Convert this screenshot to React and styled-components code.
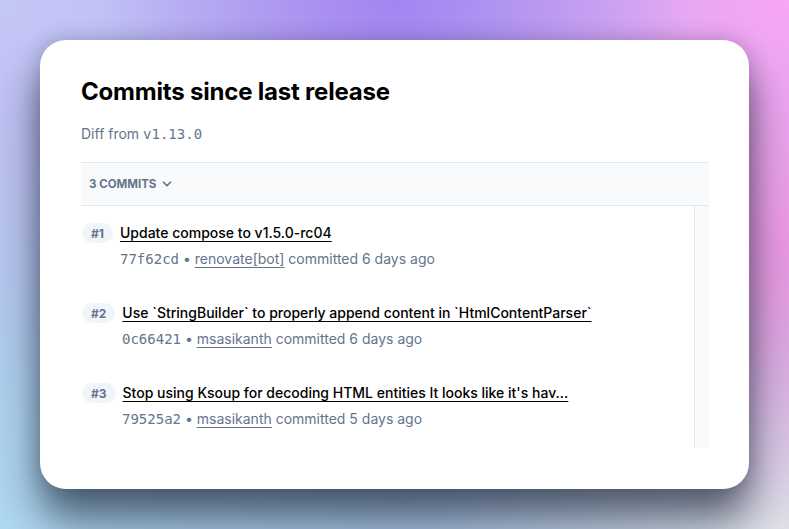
import styled, { createGlobalStyle } from "styled-components";
import { FiChevronDown } from "react-icons/fi";

const GlobalStyle = createGlobalStyle`
  html, body {
    margin: 0;
    padding: 0;
  }
  body {
    width: 789px;
    height: 529px;
    overflow: hidden;
    font-family: Inter, "Liberation Sans", sans-serif;
    background-color: #b7b4ee;
    background-image:
      radial-gradient(circle at 50% 0%, #a584f1 0%, rgba(165, 132, 241, 0) 45%),
      radial-gradient(circle at 100% 0%, #f7a6f4 0%, rgba(247, 166, 244, 0) 40%),
      radial-gradient(circle at 100% 45%, #e590da 0%, rgba(229, 144, 218, 0) 35%),
      radial-gradient(circle at 0% 0%, #c4c8f6 0%, rgba(196, 200, 246, 0) 40%),
      radial-gradient(circle at 0% 100%, #afd8f1 0%, rgba(175, 216, 241, 0) 45%),
      radial-gradient(circle at 100% 100%, #dfe2e8 0%, rgba(223, 226, 232, 0) 40%),
      linear-gradient(180deg, #b9b2f0 0%, #a9c4e4 100%);
  }
`;

const Page = styled.div`
  padding: 40px;
  box-sizing: border-box;
  height: 529px;
`;

const Card = styled.section`
  box-sizing: border-box;
  width: 709px;
  height: 449px;
  background: #ffffff;
  border-radius: 26px;
  padding: 36px 40px 0 41px;
  box-shadow: 0 30px 42px rgba(15, 25, 40, 0.62), 0 0 20px rgba(30, 30, 60, 0.22);
  display: flex;
  flex-direction: column;
`;

const Title = styled.h1`
  margin: 0;
  font-size: 24px;
  line-height: 32px;
  font-weight: 700;
  color: #000;
  letter-spacing: -0.2px;
`;

const Subtitle = styled.p`
  margin: 16px 0 18px;
  font-size: 14px;
  line-height: 20px;
  color: #64748b;
`;

const Mono = styled.code`
  font-family: "DejaVu Sans Mono", "Liberation Mono", monospace;
  font-size: 14px;
`;

const ListHeader = styled.div`
  display: flex;
  align-items: center;
  gap: 4px;
  height: 42px;
  padding: 0 8px;
  background: #f8fafc;
  border-top: 1px solid #e2e8f0;
  border-bottom: 1px solid #e2e8f0;
  font-size: 11.5px;
  font-weight: 700;
  color: #64748b;
  text-transform: uppercase;
`;

const ListArea = styled.div`
  display: flex;
  height: 242px;
`;

const List = styled.ul`
  flex: 1;
  margin: 0;
  padding: 0;
  list-style: none;
`;

const ScrollTrack = styled.div`
  width: 14px;
  background: #fafafa;
  border-left: 1px solid #e8e8e8;
`;

const Item = styled.li`
  display: flex;
  flex-direction: column;
  gap: 6px;
  padding: 17px 0 17px 1px;
`;

const Row = styled.div`
  display: flex;
  align-items: center;
  gap: 7px;
`;

const Badge = styled.span`
  display: inline-flex;
  align-items: center;
  justify-content: center;
  height: 20px;
  padding: 0 9px;
  border-radius: 10px;
  background: #f1f5f9;
  font-size: 12px;
  font-weight: 700;
  color: #64748b;
`;

const CommitLink = styled.a`
  font-size: 14px;
  line-height: 20px;
  font-weight: 500;
  color: #000;
  text-decoration: underline;
  text-underline-offset: 3px;
  white-space: nowrap;
`;

const Meta = styled.div`
  padding-left: ${(p) => p.$indent}px;
  font-size: 14px;
  line-height: 20px;
  color: #64748b;
`;

const Author = styled.a`
  color: #64748b;
  text-decoration: underline;
  text-underline-offset: 3px;
`;

const commits = [
  { n: 1, title: "Update compose to v1.5.0-rc04", sha: "77f62cd", author: "renovate[bot]", when: "6 days ago" },
  {
    n: 2,
    title: "Use `StringBuilder` to properly append content in `HtmlContentParser`",
    sha: "0c66421",
    author: "msasikanth",
    when: "6 days ago",
  },
  {
    n: 3,
    title: "Stop using Ksoup for decoding HTML entities It looks like it's hav...",
    sha: "79525a2",
    author: "msasikanth",
    when: "5 days ago",
  },
];

export default function App() {
  return (
    <>
      <GlobalStyle />
      <Page>
        <Card>
          <Title>Commits since last release</Title>
          <Subtitle>
            Diff from <Mono>v1.13.0</Mono>
          </Subtitle>
          <ListHeader>
            3 commits <FiChevronDown size={14} strokeWidth={3} />
          </ListHeader>
          <ListArea>
            <List>
              {commits.map((c) => (
                <Item key={c.n}>
                  <Row>
                    <Badge>#{c.n}</Badge>
                    <CommitLink href="#">{c.title}</CommitLink>
                  </Row>
                  <Meta $indent={c.n === 1 ? 38 : 40}>
                    <Mono>{c.sha}</Mono> • <Author href="#">{c.author}</Author> committed {c.when}
                  </Meta>
                </Item>
              ))}
            </List>
            <ScrollTrack />
          </ListArea>
        </Card>
      </Page>
    </>
  );
}
